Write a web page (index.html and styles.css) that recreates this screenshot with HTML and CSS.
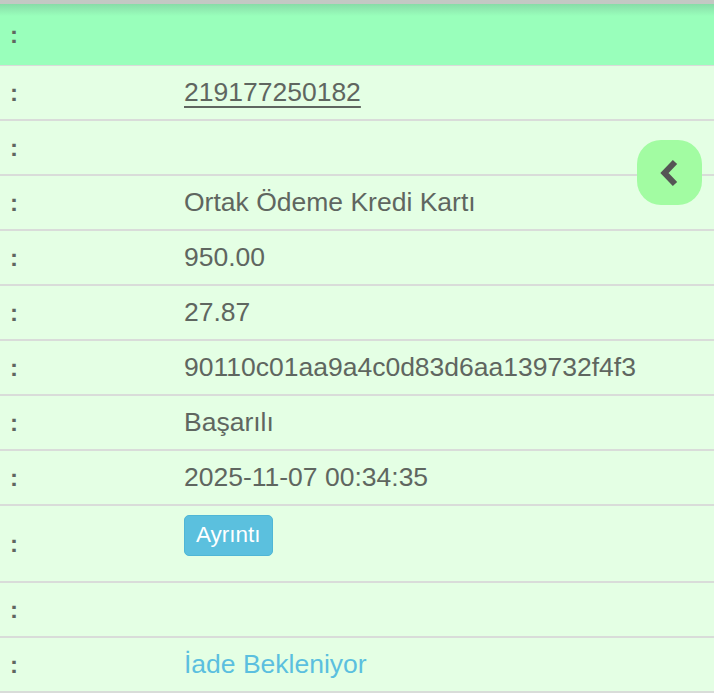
FILE: index.html
```html
<!DOCTYPE html>
<html lang="tr">
<head>
  <meta charset="UTF-8" />
  <title>İşlem Detayı</title>
  <meta name="viewport" content="width=device-width, initial-scale=1.0" />
  <link rel="stylesheet" href="styles.css">
</head>
<body>
  <div class="topbar"></div>

  <div class="details">
    <div class="row head">
      <span class="label">:</span>
      <span class="value"></span>
    </div>
    <div class="row">
      <span class="label">:</span>
      <span class="value"><a class="ref" href="#">219177250182</a></span>
    </div>
    <div class="row">
      <span class="label">:</span>
      <span class="value"></span>
    </div>
    <div class="row">
      <span class="label">:</span>
      <span class="value">Ortak Ödeme Kredi Kartı</span>
    </div>
    <div class="row">
      <span class="label">:</span>
      <span class="value">950.00</span>
    </div>
    <div class="row">
      <span class="label">:</span>
      <span class="value">27.87</span>
    </div>
    <div class="row">
      <span class="label">:</span>
      <span class="value">90110c01aa9a4c0d83d6aa139732f4f3</span>
    </div>
    <div class="row">
      <span class="label">:</span>
      <span class="value">Başarılı</span>
    </div>
    <div class="row">
      <span class="label">:</span>
      <span class="value">2025-11-07 00:34:35</span>
    </div>
    <div class="row tall">
      <span class="label">:</span>
      <span class="value"><button class="btn-info">Ayrıntı</button></span>
    </div>
    <div class="row">
      <span class="label">:</span>
      <span class="value"></span>
    </div>
    <div class="row">
      <span class="label">:</span>
      <span class="value status">İade Bekleniyor</span>
    </div>
  </div>

  <!-- side menu toggle -->
  <button class="side-toggle" aria-label="Menü">
    <svg width="26" height="30" viewBox="0 0 26 30">
      <path d="M18 4 L7.5 15 L18 26" fill="none" stroke="#555" stroke-width="6" stroke-linejoin="miter" stroke-linecap="butt"/>
    </svg>
  </button>
</body>
</html>
```

FILE: styles.css
```css
body {
  margin: 0;
  padding: 0;
  background-color: #e4ffe4;
  font-family: 'Liberation Sans', Arial, sans-serif;
  color: #5f6660;
  overflow: hidden;
}
.topbar {
  height: 4px;
  background-color: #c4c8c4;
}
.row {
  display: grid;
  grid-template-columns: 184px 1fr;
  align-items: center;
  height: 53px;
  border-bottom: 2px solid #d9dcd9;
  font-size: 26.5px;
}
.row.head {
  height: 61px;
  border-bottom-width: 1px;
  background: linear-gradient(#88dca8 0, #99ffbb 12px, #99ffbb 100%);
}
.row.tall {
  height: 75px;
}
.label {
  padding-left: 10px;
  font-size: 24px;
  font-weight: bold;
}
.ref {
  color: #5f6660;
  text-decoration: underline;
  text-underline-offset: 5px;
}
.status {
  color: #5bbfdf;
}
.btn-info {
  margin-bottom: 17px;
  height: 41px;
  padding: 0 11px;
  background-color: #5bc0de;
  border: 1px solid #4fb6d6;
  border-radius: 5px;
  color: white;
  font-family: 'Liberation Sans', Arial, sans-serif;
  font-size: 22.5px;
}
.side-toggle {
  position: fixed;
  top: 140px;
  left: 637px;
  width: 65px;
  height: 65px;
  border: none;
  border-radius: 24px;
  background-color: #a2fca2;
  display: flex;
  align-items: center;
  justify-content: center;
  padding: 0;
}
```
